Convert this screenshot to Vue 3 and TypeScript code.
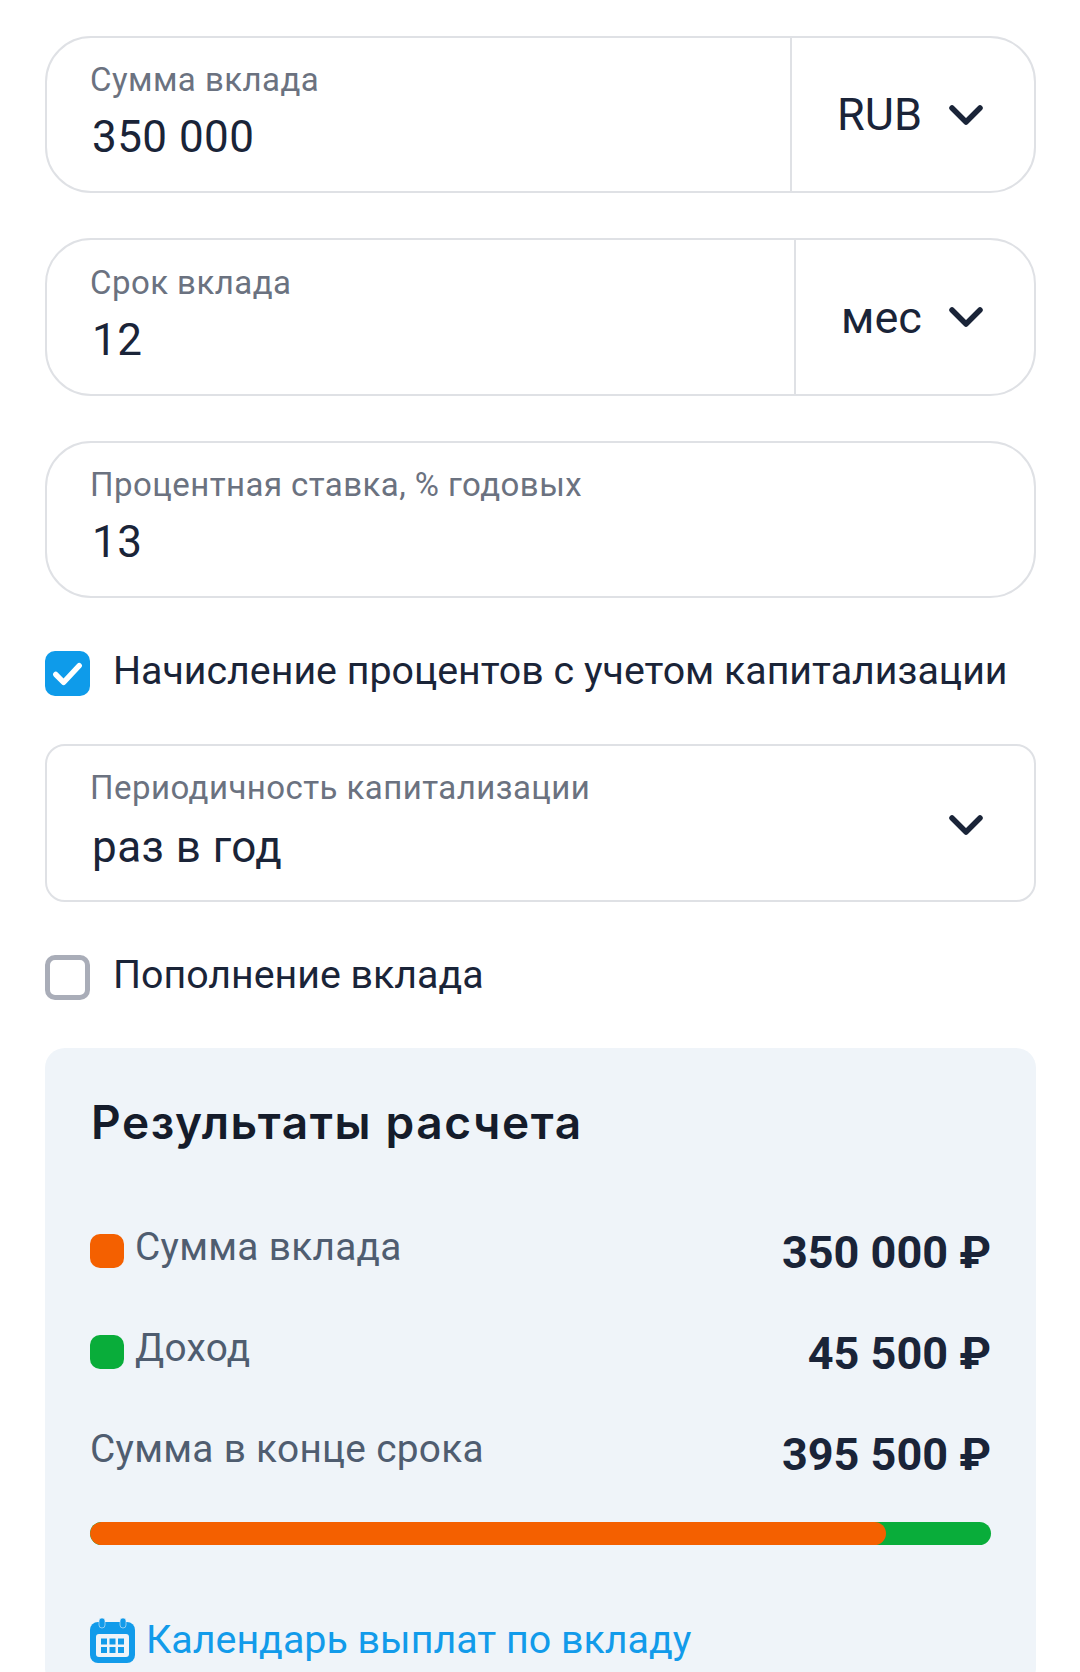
<script setup lang="ts">
interface Row { label: string; value: string; dot?: string }
const rows: Row[] = [
  { label: 'Сумма вклада', value: '350 000 ₽', dot: 'orange' },
  { label: 'Доход', value: '45 500 ₽', dot: 'green' },
  { label: 'Сумма в конце срока', value: '395 500 ₽' },
]
</script>

<template>
  <main class="page">
    <section class="field">
      <div class="main">
        <div class="label">Сумма вклада</div>
        <div class="value">350 000</div>
      </div>
      <div class="unit unit-rub">
        <span>RUB</span>
        <svg class="chev" viewBox="0 0 34 22"><path d="M3 4l14 14L31 4" /></svg>
      </div>
    </section>

    <section class="field term">
      <div class="main">
        <div class="label">Срок вклада</div>
        <div class="value">12</div>
      </div>
      <div class="unit unit-mes">
        <span>мес</span>
        <svg class="chev" viewBox="0 0 34 22"><path d="M3 4l14 14L31 4" /></svg>
      </div>
    </section>

    <section class="field rate">
      <div class="main">
        <div class="label">Процентная ставка, % годовых</div>
        <div class="value">13</div>
      </div>
    </section>

    <label class="check check-first">
      <span class="box on">
        <svg viewBox="0 0 46 46"><path d="M11 24l8 8 16-17" /></svg>
      </span>
      <span class="check-text">Начисление процентов с учетом капитализации</span>
    </label>

    <section class="field select">
      <div class="main">
        <div class="label">Периодичность капитализации</div>
        <div class="value">раз в год</div>
      </div>
      <svg class="chev" viewBox="0 0 34 22"><path d="M3 4l14 14L31 4" /></svg>
    </section>

    <label class="check check-second">
      <span class="box"></span>
      <span class="check-text">Пополнение вклада</span>
    </label>

    <section class="panel">
      <h2>Результаты расчета</h2>
      <div v-for="row in rows" :key="row.label" class="row">
        <div class="row-label">
          <i v-if="row.dot" class="dot" :class="row.dot"></i>
          <span>{{ row.label }}</span>
        </div>
        <b>{{ row.value }}</b>
      </div>
      <div class="bar"><div class="bar-fill"></div></div>
      <a class="link">
        <svg viewBox="0 0 45 45" class="cal">
          <rect x="0" y="4" width="45" height="41" rx="8" fill="#129bea" />
          <rect x="9" y="0" width="6" height="10" rx="3" fill="#129bea" stroke="#e4eff8" stroke-width=".6" />
          <rect x="30" y="0" width="6" height="10" rx="3" fill="#129bea" stroke="#e4eff8" stroke-width=".6" />
          <rect x="6" y="16" width="33" height="23" rx="3" fill="#eff4f9" />
          <g fill="#129bea">
            <rect x="11" y="20.5" width="6" height="6" />
            <rect x="19.5" y="20.5" width="6" height="6" />
            <rect x="28" y="20.5" width="6" height="6" />
            <rect x="11" y="29" width="6" height="6" />
            <rect x="19.5" y="29" width="6" height="6" />
            <rect x="28" y="29" width="6" height="6" />
          </g>
        </svg>
        <span>Календарь выплат по вкладу</span>
      </a>
    </section>
  </main>
</template>

<style>
html, body { margin: 0; background: #fff; }
</style>

<style scoped>
.page {
  box-sizing: border-box;
  height: 1672px;
  overflow: hidden;
  padding: 36px 44px 0 45px;
  font-family: Roboto, "Liberation Sans", sans-serif;
  color: #1a2438;
  background: #fff;
}
.field {
  box-sizing: border-box;
  display: flex;
  height: 157px;
  border: 2px solid #dfe1e5;
  border-radius: 46px;
}
.term { margin-top: 45px; height: 158px; }
.rate { margin-top: 45px; }
.main { flex: 1; padding: 22px 0 0 43px; }
.term .main { padding-top: 23px; }
.label {
  font-size: 33px;
  line-height: 40px;
  color: #6b7280;
  letter-spacing: .45px;
}
.value {
  margin-top: 10px;
  padding-left: 2px;
  font-size: 44px;
  line-height: 54px;
  letter-spacing: .45px;
}
.unit {
  box-sizing: border-box;
  display: flex;
  align-items: center;
  justify-content: space-between;
  border-left: 2px solid #dfe1e5;
  font-size: 45px;
  padding: 0 51px 0 45px;
}
.unit-rub { width: 244px; }
.unit-mes { width: 240px; }
.chev { width: 34px; height: 22px; flex: none; }
.chev path { fill: none; stroke: #1a2438; stroke-width: 5.5; stroke-linecap: round; stroke-linejoin: round; }
.check {
  display: flex;
  align-items: center;
  gap: 23px;
  font-size: 39.35px;
  line-height: 41px;
}
.check-text { padding-bottom: 4px; }
.check-first { margin-top: 53px; }
.check-second { margin-top: 53px; }
.box {
  box-sizing: border-box;
  flex: none;
  width: 45px;
  height: 45px;
  border: 5px solid #a9adb8;
  border-radius: 10px;
  background: #fff;
}
.box.on { border: 0; background: #0e9bea; }
.box svg { display: block; }
.box path { fill: none; stroke: #fff; stroke-width: 5.5; stroke-linecap: round; stroke-linejoin: round; }
.select { margin-top: 48px; height: 158px; border-radius: 20px; }
.select .value { margin-top: 12px; }
.select .chev { margin: 68px 51px 0 0; }
.panel {
  margin-top: 48px;
  height: 640px;
  box-sizing: border-box;
  padding: 44px 45px 0;
  background: #eff4f9;
  border-radius: 20px;
}
h2 {
  margin: 0 0 73px;
  padding-left: 1px;
  font-family: Inter, sans-serif;
  font-size: 46px;
  line-height: 60px;
  font-weight: 600;
  letter-spacing: 1.6px;
  color: #151c2b;
}
.row {
  display: flex;
  justify-content: space-between;
  align-items: flex-start;
  height: 101px;
}
.row-label {
  display: flex;
  align-items: center;
  gap: 11px;
  font-size: 38.8px;
  line-height: 44px;
  color: #4f5d70;
  letter-spacing: .3px;
}
.dot { width: 34px; height: 34px; border-radius: 10px; margin-top: 8px; }
.orange { background: #f46000; }
.green { background: #09ad3a; }
.row b { margin-top: 2px; font-size: 45px; line-height: 52px; font-weight: 700; color: #1a2438; }
.bar {
  height: 23px;
  margin-top: -6px;
  border-radius: 12px;
  background: #09ad3a;
  overflow: hidden;
}
.bar-fill { width: 796px; height: 100%; border-radius: 12px; background: #f46000; }
.link {
  display: flex;
  align-items: center;
  gap: 11px;
  margin-top: 72px;
  font-size: 39.4px;
  line-height: 46px;
  color: #129bea;
}
.cal { width: 45px; height: 45px; flex: none; }
</style>
